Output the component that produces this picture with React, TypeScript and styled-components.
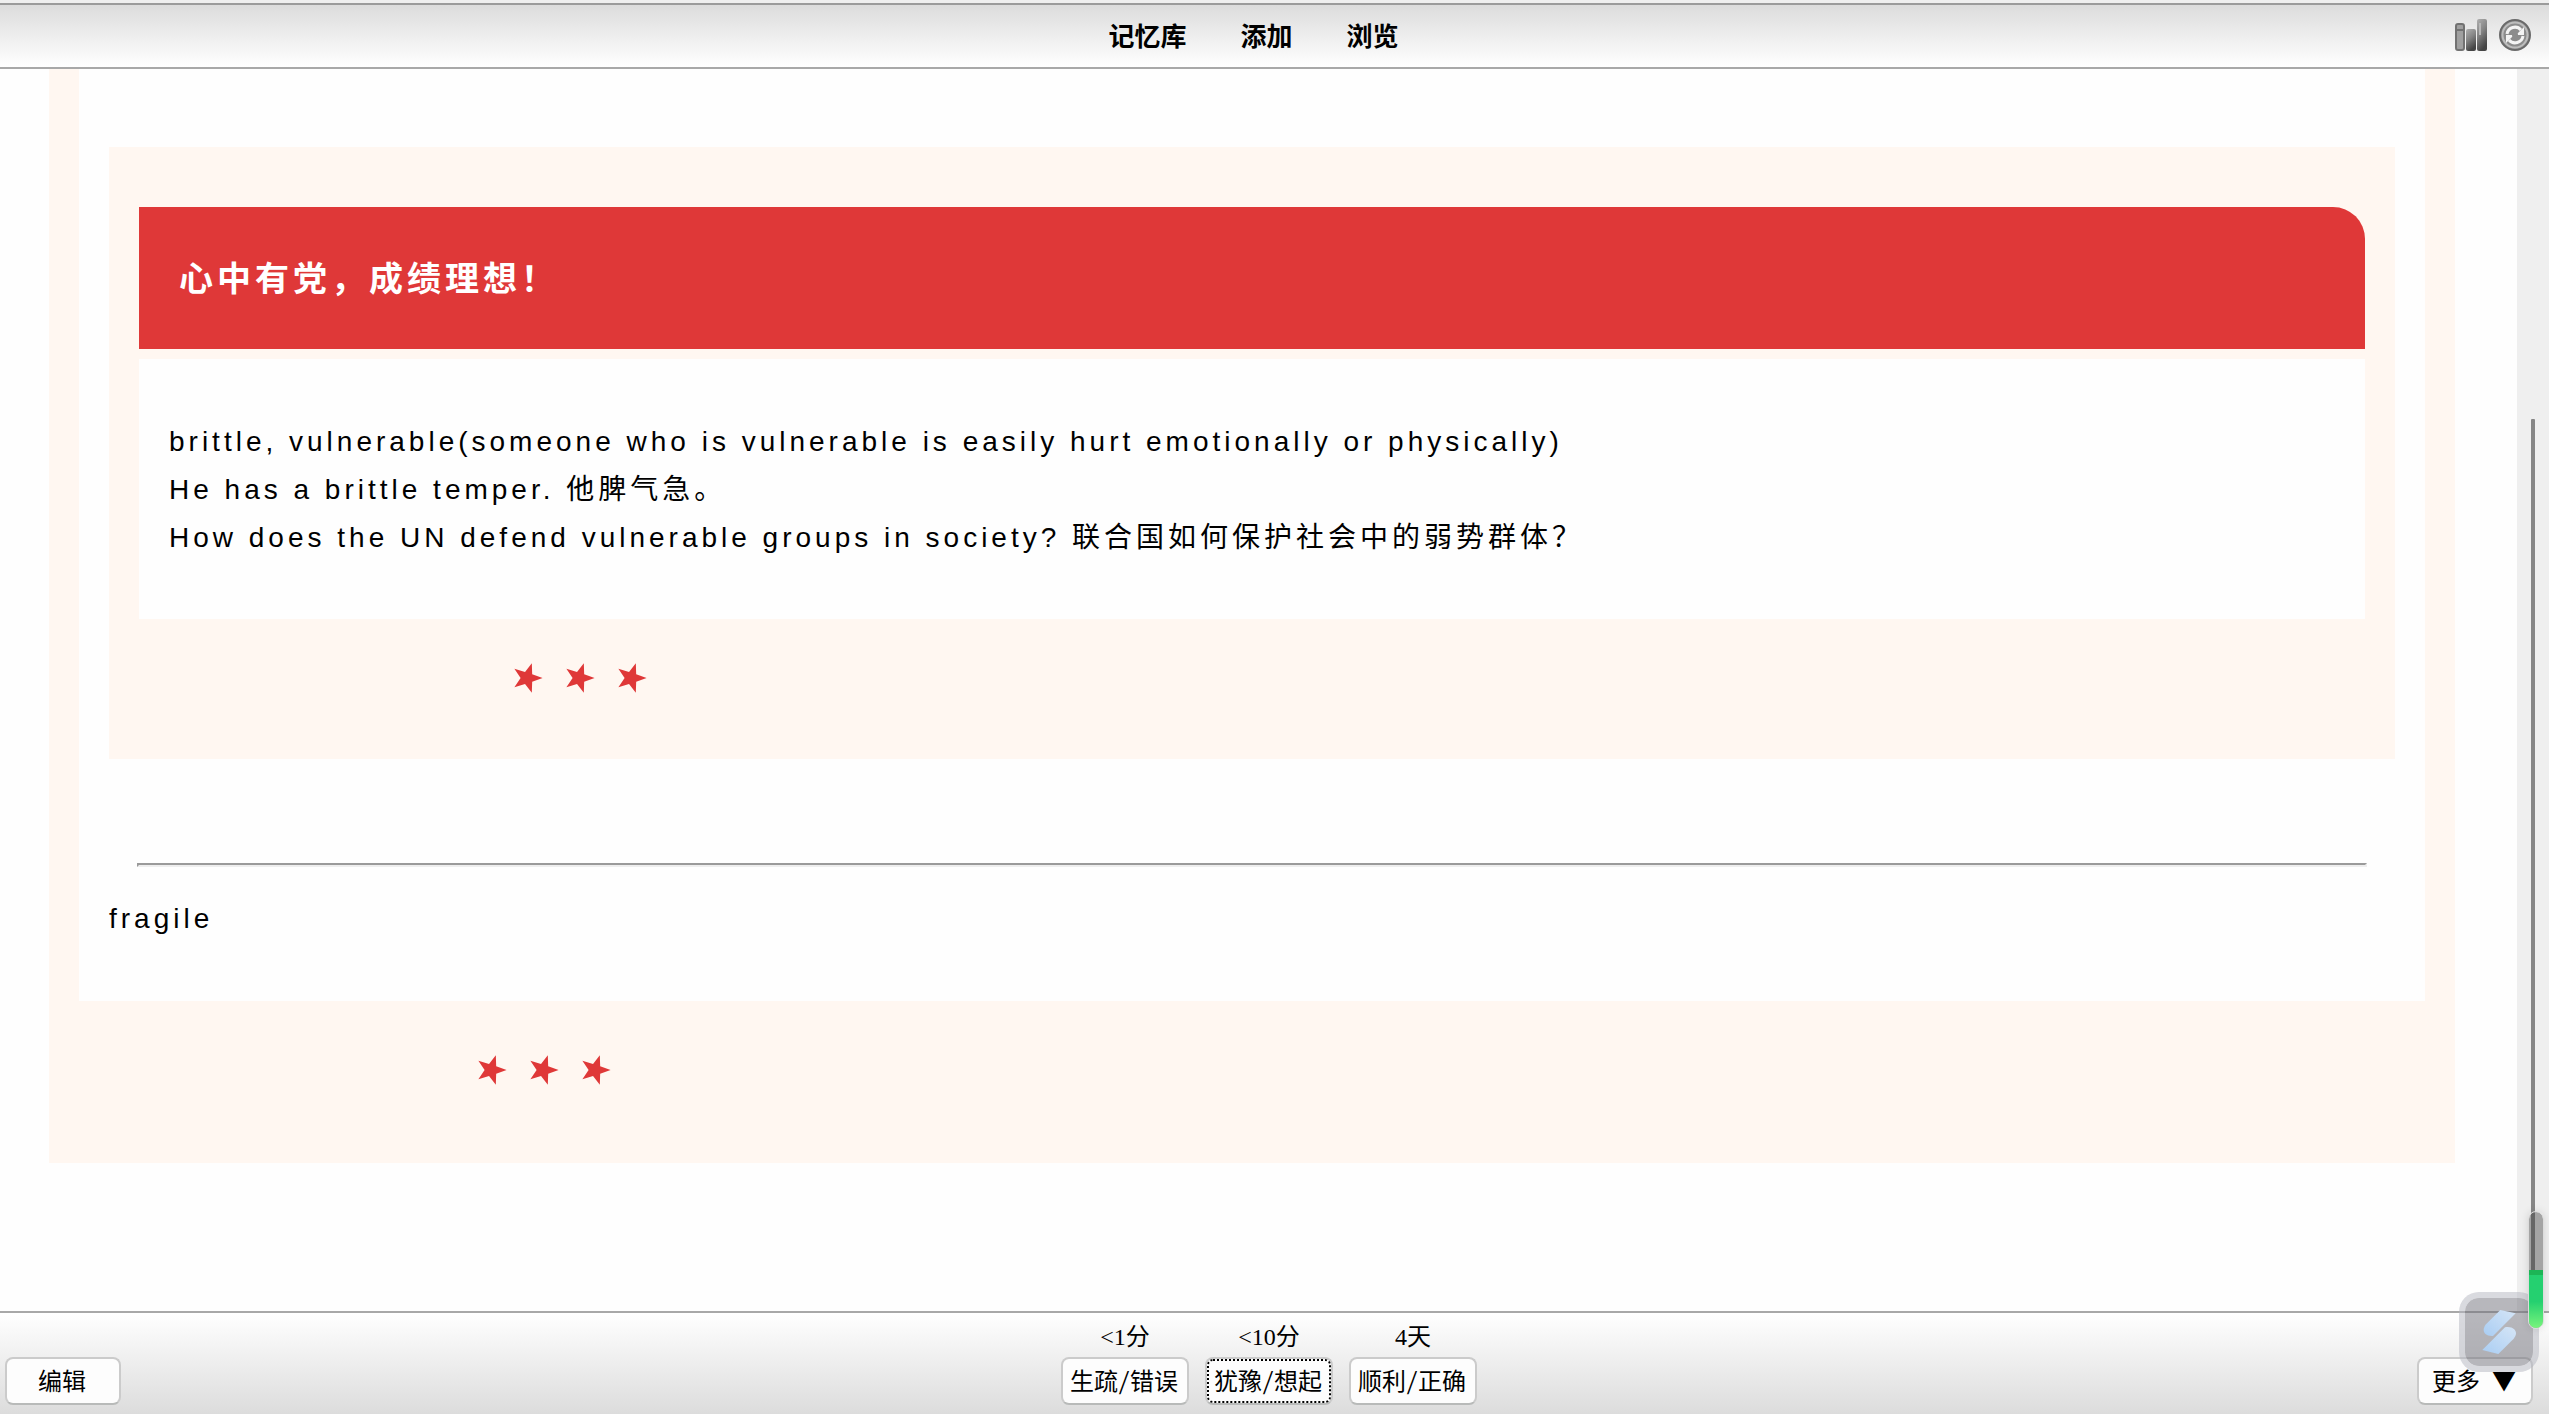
import React from "react";
import styled, { createGlobalStyle } from "styled-components";

const cream = "#fff7f1";
const red = "#df3838";
const line = "#a8a8a8";

const GlobalStyle = createGlobalStyle`
  * { box-sizing: border-box; }
  body {
    margin: 0;
    background: #fefefe;
    color: #000;
    font-family: "Liberation Sans", "Noto Sans CJK SC", sans-serif;
  }
`;

const Page = styled.div`
  display: flex;
  flex-direction: column;
  min-height: 100vh;
`;

const Header = styled.header`
  display: flex;
  align-items: center;
  height: 69px;
  padding: 3px 18px 0 52px;
  border-bottom: 2px solid ${line};
  background:
    linear-gradient(#efefef, #efefef) 0 0 / 100% 3px no-repeat,
    linear-gradient(#9b9b9b, #9b9b9b) 0 3px / 100% 2px no-repeat,
    linear-gradient(#dcdcdc, #fff) 0 5px / 100% 62px no-repeat;
`;

const Nav = styled.nav`
  display: flex;
  flex: 1;
  justify-content: center;
  gap: 54px;
`;

const NavLink = styled.a`
  color: #000;
  font: 700 26px/36px "Noto Sans CJK SC", sans-serif;
  text-decoration: none;
`;

const Tools = styled.div`
  display: flex;
  gap: 12px;
`;

const IconButton = styled.button`
  display: block;
  width: 32px;
  height: 32px;
  padding: 0;
  border: 0;
  background: none;

  svg { display: block; }
`;

const Main = styled.main`
  display: flex;
  flex: 1;
`;

const Viewport = styled.div`
  flex: 1;
  min-width: 0;
  padding: 0 62px 0 49px;
`;

const ScrollTrack = styled.div`
  display: flex;
  flex-direction: column;
  width: 32px;
  padding-left: 14px;
  background: #efefef;
`;

const ScrollSpace = styled.div<{ $share: number }>`
  flex: ${(p) => p.$share} 0 0;
`;

const ScrollThumb = styled(ScrollSpace)`
  width: 4px;
  border-radius: 1px;
  background: #868686;
`;

const OuterCard = styled.section`
  padding: 0 30px 77px;
  background: ${cream};
`;

const OuterBody = styled.div`
  padding: 78px 30px 58px;
  background: #fefefe;
`;

const InnerCard = styled.article`
  padding: 60px 30px 65px;
  background: ${cream};
`;

const Banner = styled.h1`
  margin: 0 0 10px;
  padding: 46px 40px 48px;
  border-top-right-radius: 32px;
  background: ${red};
  color: #fff;
  font: 700 34px/48px "Noto Sans CJK SC", sans-serif;
  letter-spacing: 4px;
`;

const InnerBody = styled.div`
  padding: 59px 30px 57px;
  background: #fefefe;
`;

const Text = styled.p`
  margin: 0;
  font-size: 28px;
  line-height: 48px;
  letter-spacing: 4px;
`;

const Rule = styled.hr`
  height: 4px;
  margin: 104px 28px 28px;
  border: 2px solid;
  border-color: #9a9a9a #eee #eee #9a9a9a;
`;

const StarRow = styled.div<{ $top: number; $left: number }>`
  display: flex;
  gap: 20px;
  margin-top: ${(p) => p.$top}px;
  padding-left: ${(p) => p.$left}px;
`;

const Footer = styled.footer`
  display: grid;
  grid-template-columns: 1fr auto 1fr;
  align-items: end;
  height: 103px;
  padding: 0 16px 9px 5px;
  border-top: 2px solid ${line};
  background: linear-gradient(#fff, #dcdcdc);
`;

const Answers = styled.div`
  display: flex;
  gap: 16px;
`;

const Answer = styled.div`
  display: flex;
  flex-direction: column;
  align-items: center;
  gap: 4px;
`;

const Due = styled.label`
  font: 24px/32px "Liberation Serif", "Noto Sans CJK SC", serif;
`;

const Button = styled.button<{ $wide?: boolean; $end?: boolean; $focused?: boolean }>`
  justify-self: ${(p) => (p.$end ? "end" : "start")};
  width: ${(p) => (p.$wide ? 128 : 116)}px;
  height: 48px;
  padding: 0 2px 2px 0;
  border: 2px solid #cbcbcb;
  border-bottom-color: #b8bab9;
  border-radius: 8px;
  background: #fdfdfd;
  color: #000;
  font: 24px/32px "Noto Sans Mono CJK SC", "Noto Sans CJK SC", sans-serif;
  white-space: nowrap;
  outline: ${(p) => (p.$focused ? "2px dotted #000" : "none")};
  outline-offset: -4px;
`;

const Widget = styled.div`
  position: fixed;
  right: 10px;
  bottom: 42px;
  width: 80px;
  height: 80px;
  border: 6px solid rgba(180, 182, 192, 0.5);
  border-radius: 20px;
  background: rgba(112, 112, 122, 0.5);
  background-clip: padding-box;
`;

const Meter = styled.div`
  position: fixed;
  right: 5px;
  bottom: 85px;
  display: flex;
  flex-direction: column;
  justify-content: flex-end;
  width: 16px;
  height: 118px;
  overflow: hidden;
  border: 1px solid #dcdcdc;
  border-radius: 8px;
  background: rgba(60, 60, 60, 0.42);
  background-clip: padding-box;
  box-shadow: 0 0 8px rgba(0, 0, 0, 0.12);
`;

const MeterFill = styled.div`
  height: 58px;
  border-top: 5px solid #1db556;
  background: linear-gradient(#25d070 50%, #78f47c);
`;

const starPoints = Array.from({ length: 10 }, (_, i) => {
  const r = i % 2 ? 6.4 : 15.6;
  const a = (i * Math.PI) / 5;
  return `${(16 + r * Math.cos(a)).toFixed(2)},${(16 + r * Math.sin(a)).toFixed(2)}`;
}).join(" ");

const Stars = ({ top, left }: { top: number; left: number }) => (
  <StarRow $top={top} $left={left} aria-hidden="true">
    {[0, 1, 2].map((n) => (
      <svg key={n} width="32" height="32" viewBox="0 0 32 32">
        <polygon points={starPoints} fill={red} />
      </svg>
    ))}
  </StarRow>
);

const StatsIcon = () => (
  <svg width="32" height="32" viewBox="0 0 32 32">
    <defs>
      <linearGradient id="bar" x1="0" y1="0" x2="0.4" y2="1">
        <stop offset="0" stopColor="#b0b0b0" />
        <stop offset="0.5" stopColor="#848484" />
        <stop offset="1" stopColor="#454545" />
      </linearGradient>
    </defs>
    <rect x="1" y="5" width="8" height="26" rx="2" fill="#a0a0a0" stroke="#727272" strokeWidth="2" />
    <path d="M1 11h8" stroke="#727272" strokeWidth="2" />
    <rect x="11" y="10" width="10" height="22" rx="2" fill="url(#bar)" />
    <rect x="22" y="0" width="10" height="32" rx="2" fill="url(#bar)" />
    <path d="M25 4v12" stroke="#b8b8b8" strokeWidth="2" />
  </svg>
);

const SyncIcon = () => (
  <svg width="32" height="32" viewBox="0 0 32 32" fill="none">
    <circle cx="16" cy="16" r="15" fill="#8c8c8c" stroke="#6a6a6a" strokeWidth="2" />
    <circle cx="16" cy="16" r="12.5" stroke="#bdbdbd" strokeWidth="2" />
    <path d="M8 15a8 8 0 0 1 14-4M24 17a8 8 0 0 1-14 4" stroke="#f4f4f4" strokeWidth="3" />
    <path d="M25 8v8h-8zM7 24v-8h8z" fill="#f4f4f4" />
    <circle cx="16" cy="16" r="3" fill="#8c8c8c" />
  </svg>
);

const WidgetIcon = () => (
  <svg width="68" height="68" viewBox="0 0 204 204" aria-hidden="true">
    <defs>
      <linearGradient id="ribbon" x1="1" y1="0" x2="0" y2="1">
        <stop offset="0" stopColor="#d5e5f6" />
        <stop offset="1" stopColor="#a9cdf3" />
      </linearGradient>
    </defs>
    <path d="M106 36L152 46L84 114C64 115 55 105 56 93Q57 85 63 79Z" fill="url(#ribbon)" />
    <path d="M52 156L120 88C140 84 154 95 153 108Q152 116 146 122L100 168Z" fill="url(#ribbon)" />
  </svg>
);

const answers = [
  { id: "again", due: "<1分", label: "生疏/错误" },
  { id: "hard", due: "<10分", label: "犹豫/想起", focused: true },
  { id: "good", due: "4天", label: "顺利/正确" },
];

export default function App() {
  return (
    <Page>
      <GlobalStyle />
      <Header>
        <Nav>
          {["记忆库", "添加", "浏览"].map((name) => (
            <NavLink key={name} href="#">{name}</NavLink>
          ))}
        </Nav>
        <Tools>
          <IconButton type="button" aria-label="统计"><StatsIcon /></IconButton>
          <IconButton type="button" aria-label="同步"><SyncIcon /></IconButton>
        </Tools>
      </Header>
      <Main>
        <Viewport>
          <OuterCard>
            <OuterBody>
              <InnerCard>
                <Banner>心中有党，成绩理想！</Banner>
                <InnerBody>
                  <Text>brittle, vulnerable(someone who is vulnerable is easily hurt emotionally or physically)</Text>
                  <Text>He has a brittle temper. 他脾气急。</Text>
                  <Text>How does the UN defend vulnerable groups in society? 联合国如何保护社会中的弱势群体？</Text>
                </InnerBody>
                <Stars top={43} left={372} />
              </InnerCard>
              <Rule />
              <Text>fragile</Text>
            </OuterBody>
            <Stars top={53} left={396} />
          </OuterCard>
        </Viewport>
        <ScrollTrack aria-hidden="true">
          <ScrollSpace $share={350} />
          <ScrollThumb $share={860} />
          <ScrollSpace $share={32} />
        </ScrollTrack>
      </Main>
      <Footer>
        <Button type="button">编辑</Button>
        <Answers>
          {answers.map((a) => (
            <Answer key={a.id}>
              <Due htmlFor={a.id}>{a.due}</Due>
              <Button id={a.id} type="button" $wide $focused={a.focused}>{a.label}</Button>
            </Answer>
          ))}
        </Answers>
        <Button type="button" $end>更多 ▼</Button>
      </Footer>
      <Widget><WidgetIcon /></Widget>
      <Meter><MeterFill /></Meter>
    </Page>
  );
}
